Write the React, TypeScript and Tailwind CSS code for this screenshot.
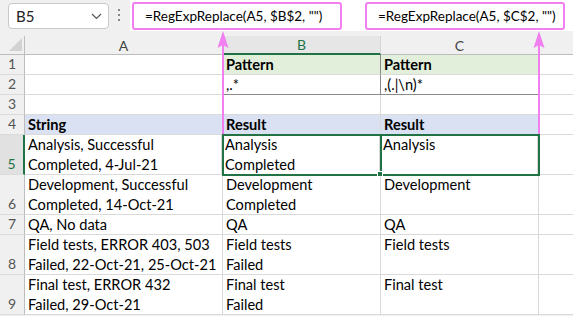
import React from "react";

type Cell = {
  text?: string;
  bold?: boolean;
  bg?: string;
};

type Row = {
  num: number;
  h: string;
  a: Cell;
  b: Cell;
  c: Cell;
};

const rows: Row[] = [
  { num: 1, h: "h-[20px]", a: {}, b: { text: "Pattern", bold: true, bg: "bg-[#e2efda]" }, c: { text: "Pattern", bold: true, bg: "bg-[#e2efda]" } },
  { num: 2, h: "h-[20px]", a: {}, b: { text: ",.*" }, c: { text: ",(.|\\n)*" } },
  { num: 3, h: "h-[20px]", a: {}, b: {}, c: {} },
  { num: 4, h: "h-[20px]", a: { text: "String", bold: true, bg: "bg-[#d9e1f2]" }, b: { text: "Result", bold: true, bg: "bg-[#d9e1f2]" }, c: { text: "Result", bold: true, bg: "bg-[#d9e1f2]" } },
  { num: 5, h: "h-[40px]", a: { text: "Analysis, Successful\nCompleted, 4-Jul-21" }, b: { text: "Analysis\nCompleted" }, c: { text: "Analysis" } },
  { num: 6, h: "h-[40px]", a: { text: "Development, Successful\nCompleted, 14-Oct-21" }, b: { text: "Development\nCompleted" }, c: { text: "Development" } },
  { num: 7, h: "h-[20px]", a: { text: "QA, No data" }, b: { text: "QA" }, c: { text: "QA" } },
  { num: 8, h: "h-[40px]", a: { text: "Field tests, ERROR 403, 503\nFailed, 22-Oct-21, 25-Oct-21" }, b: { text: "Field tests\nFailed" }, c: { text: "Field tests" } },
  { num: 9, h: "h-[40px]", a: { text: "Final test, ERROR 432\nFailed, 29-Oct-21" }, b: { text: "Final test\nFailed" }, c: { text: "Final test" } },
];

function CellBox({ cell, width, extra = "" }: { cell: Cell; width: string; extra?: string }) {
  return (
    <div
      className={`relative ${width} shrink-0 overflow-hidden border-r border-b border-[#dadada] px-[3px] whitespace-pre leading-[20px] text-black ${cell.bold ? "font-bold" : ""} ${cell.bg ?? "bg-white"} ${extra}`}
    >
      {cell.text}
    </div>
  );
}

export default function App() {
  return (
    <div className="relative w-[573px] h-[316px] overflow-hidden bg-[#f0f0f0] font-['Lato',sans-serif] text-[14.6px]">

      {/* FORMULA BAR */}
      <div className="flex h-[36px]">
        <div className="flex w-[130px] shrink-0 items-start">
          <div className="ml-[8px] mt-[3px] flex h-[26px] w-[101px] items-center justify-between rounded-[4px] border border-[#c8c8c8] bg-white pl-[7px] pr-[6px] text-[15px] text-[#222]">
            <span>B5</span>
            <svg width="11" height="7" viewBox="0 0 11 7">
              <path d="M1 1 L5.5 5.5 L10 1" fill="none" stroke="#555" strokeWidth="1.2" />
            </svg>
          </div>
          <div className="ml-[9px] mt-[9px] flex flex-col gap-[3px]">
            <span className="block h-[2px] w-[2px] bg-[#888]" />
            <span className="block h-[2px] w-[2px] bg-[#888]" />
            <span className="block h-[2px] w-[2px] bg-[#888]" />
          </div>
        </div>
        <div className="flex h-[31px] flex-1 items-start bg-white">
          <div className="ml-[2px] mt-[2px] flex h-[28px] w-[210px] items-center whitespace-nowrap rounded-[3px] border-2 border-[#f27ff0] pl-[11px] text-[13.5px] text-black">
            =RegExpReplace(A5, $B$2, "")
          </div>
          <div className="ml-[23px] mt-[2px] flex h-[28px] w-[200px] items-center whitespace-nowrap rounded-[3px] border-2 border-[#f27ff0] pl-[11px] text-[13.5px] text-black">
            =RegExpReplace(A5, $C$2, "")
          </div>
        </div>
      </div>

      {/* COLUMN HEADERS */}
      <div className="flex h-[19px] border-b border-[#bdbdbd] text-[14px] text-[#444]">
        <div className="relative w-[25px] shrink-0 border-r border-[#bdbdbd]">
          <svg className="absolute left-[9px] top-[2px]" width="13" height="13" viewBox="0 0 13 13">
            <path d="M13 0 L13 13 L0 13 Z" fill="#d2d2d2" />
          </svg>
        </div>
        <div className="flex w-[198px] shrink-0 items-center justify-center border-r border-[#d4d4d4]">A</div>
        <div className="-mb-px flex w-[158px] shrink-0 items-center justify-center border-r border-b-2 border-[#d4d4d4] border-b-[#217346] bg-[#e6e6e6] text-[#217346]">B</div>
        <div className="flex w-[158px] shrink-0 items-center justify-center border-r border-[#d4d4d4]">C</div>
        <div className="flex-1" />
      </div>

      {/* ROWS */}
      {rows.map((r) => {
        const sel = r.num === 5;
        const box = r.num === 1 || r.num === 2;
        const boxBottom = r.num === 2 ? "border-b-[#8a8a8a]" : "";
        return (
          <div key={r.num} className={`flex ${r.h}`}>
            <div
              className={`flex w-[25px] shrink-0 items-end justify-center border-b border-b-[#dadada] leading-[20px] text-[14px] ${
                sel ? "border-r-2 border-r-[#217346] bg-[#e1e1e1] text-[#217346]" : "border-r border-r-[#bdbdbd] bg-[#f0f0f0] text-[#555]"
              }`}
            >
              {r.num}
            </div>
            <CellBox cell={r.a} width={sel ? "w-[197px]" : "w-[198px]"} extra={box ? "border-r-[#8a8a8a]" : ""} />
            <CellBox cell={r.b} width="w-[158px]" extra={`${box ? "border-r-[#8a8a8a]" : ""} ${boxBottom}`} />
            <CellBox cell={r.c} width="w-[158px]" extra={`${box ? "border-r-[#8a8a8a]" : ""} ${boxBottom}`} />
            <div className="flex-1 border-b border-[#dadada] bg-white" />
          </div>
        );
      })}

      {/* SELECTION OUTLINES */}
      <div className="pointer-events-none absolute left-[222px] top-[134px] h-[42px] w-[160px] border-2 border-[#217346]" />
      <div className="pointer-events-none absolute left-[380px] top-[134px] h-[42px] w-[160px] border-2 border-[#217346]" />
      <div className="pointer-events-none absolute left-[377px] top-[171px] h-[6px] w-[6px] border border-white bg-[#217346]" />

      {/* PINK ARROWS */}
      <svg className="pointer-events-none absolute left-0 top-0" width="573" height="316" viewBox="0 0 573 316">
        <line x1="223" y1="40" x2="223" y2="134" stroke="#f27ff0" strokeWidth="2" />
        <path d="M223 31 L228.5 48 L223 45 L217.5 48 Z" fill="#f27ff0" />
        <line x1="539" y1="40" x2="539" y2="134" stroke="#f27ff0" strokeWidth="2" />
        <path d="M539 31 L544.5 48 L539 45 L533.5 48 Z" fill="#f27ff0" />
      </svg>
    </div>
  );
}
